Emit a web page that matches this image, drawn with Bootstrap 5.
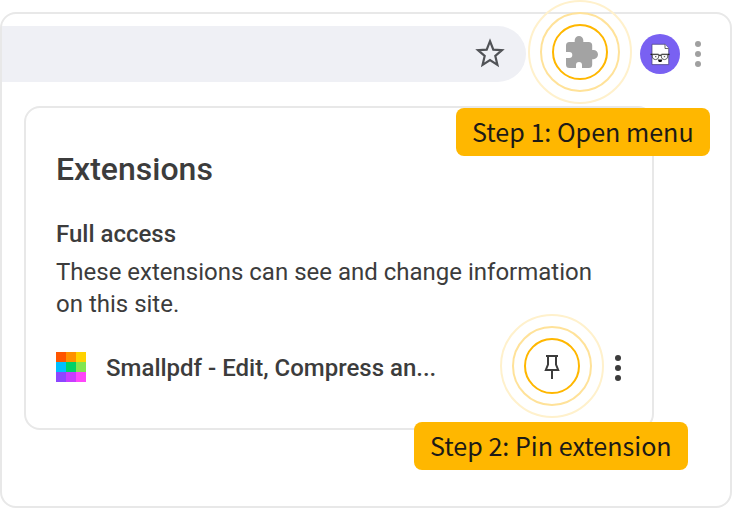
<!DOCTYPE html>
<html lang="en">
<head>
<meta charset="utf-8">
<meta name="viewport" content="width=device-width, initial-scale=1">
<title>Extensions</title>
<link href="https://cdn.jsdelivr.net/npm/bootstrap@5.3.0/dist/css/bootstrap.min.css" rel="stylesheet">
<style>
body{background:#fff;font-family:Roboto,sans-serif;color:#3c3c3c;padding-top:12px;height:508px;overflow:hidden}
svg{display:block;flex:none}
.browser{height:496px;border:2px solid #e8e8e8;border-radius:16px}
.toolbar{height:56px;margin-top:12px}
.address{width:524px;height:56px;background:#eff0f5;border-radius:0 28px 28px 0;padding-right:18px}
.address svg{margin-top:-2px}
.ext-button{margin-left:26px;width:56px;height:56px;top:-2px}
.ext-button svg{margin-left:4px}
.avatar{margin-left:32px;width:40px;height:40px;background:#7961f2}
.panel{width:630px;height:324px;margin:24px 0 0 22px;border:2px solid #e8e8e8;border-radius:16px;padding:0 30px}
.panel h1{font-size:32px;line-height:40px;font-weight:500;margin:41px 0 0}
.panel h2{font-size:24px;line-height:32px;font-weight:500;margin:29px 0 0}
.panel p{font-size:24px;line-height:32px;margin:6px 0 0}
.entry{height:56px;margin-top:18px}
.entry-logo{margin-top:2px}
.entry-name{font-size:24px;line-height:32px;font-weight:500;margin-left:20px;width:418px;margin-top:4px}
.entry-more{margin:4px 0 0 35px}
.pulse{width:56px;height:56px;border:2px solid #ffb700;border-radius:50%}
.pulse::before,.pulse::after{content:"";position:absolute;border:2px solid #ffe299;border-radius:50%;inset:-14px}
.pulse::after{border-color:#fff1cc;inset:-26px}
.step{background:#ffb700;color:#1c1a17;border-radius:8px;height:48px;font:400 25.1px/46px "Noto Sans CJK SC",sans-serif;padding:0 16px;white-space:nowrap}
.step-open{left:456px;top:108px;width:254px}
.step-pin{left:414px;top:422px;width:274px}
</style>
</head>
<body>
<main class="browser">
  <div class="toolbar d-flex align-items-center">
    <div class="address d-flex align-items-center justify-content-end">
      <svg width="36" height="36" viewBox="0 0 36 36" fill="none" stroke="#505256" stroke-width="2.2" stroke-miterlimit="10"><path d="M18 6.2L21.3 14.6L30 15.2L23.3 21L25.4 29.8L18 25L10.6 29.8L12.7 21L6 15.2L14.7 14.6Z"/></svg>
    </div>
    <div class="ext-button pulse position-relative d-flex align-items-center justify-content-center">
      <svg width="32" height="32" viewBox="0 0 32 32" fill="#a3a3a3"><path d="M3.5 6H8.7V4.3a4.3 4.3 0 0 1 8.6 0V6h5.4A3.5 3.5 0 0 1 26.2 9.5V14h1.2a4.6 4.6 0 0 1 0 9.2h-1.2v5.3a3.5 3.5 0 0 1-3.5 3.5H16v-3a3 3 0 0 0-6 0v3H3.5A3.5 3.5 0 0 1 0 28.5V22h3.3a3 3 0 0 0 0-6H0V9.5A3.5 3.5 0 0 1 3.5 6z"/></svg>
    </div>
    <div class="avatar rounded-circle">
      <svg width="40" height="40" viewBox="0 0 40 40"><path d="M12 10.3h13.2l3.5 4V30.6H12z" fill="#fff" stroke="#443b78" stroke-width=".7"/><path d="M25 10.5v4h3.6" fill="#fff" stroke="#444" stroke-width=".8"/><path d="M10.5 20.4h8M21.5 20.4h8M18.6 21.6q1.4-1 2.8 0" fill="none" stroke="#222" stroke-width="1.1"/><path d="M12.3 20.6h6.4v2.4q-.6 2.6-3.2 2.6t-3.2-2.6zM21.3 20.6h6.4v2.4q-.6 2.6-3.2 2.6t-3.2-2.6z" fill="#fff" stroke="#333" stroke-width=".8"/><path d="M15 22.7h1.4M23.8 22.7h1.4" stroke="#444"/><path d="M17.8 25.5h4.6l-1 2.4h-2.6z" fill="#111"/></svg>
    </div>
    <svg class="ms-3" width="4" height="28" viewBox="0 0 4 28" overflow="visible" fill="#a0a0a0"><circle cx="2" cy="4" r="3"/><circle cx="2" cy="14" r="3"/><circle cx="2" cy="24" r="3"/></svg>
  </div>
  <section class="panel">
    <h1>Extensions</h1>
    <h2>Full access</h2>
    <p>These extensions can see and change information<br>on this site.</p>
    <div class="entry d-flex align-items-center">
      <svg class="entry-logo" width="30" height="30" viewBox="0 0 30 30" shape-rendering="crispEdges"><path fill="#ff5500" d="M0 0h10v10H0z"/><path fill="#ff9100" d="M10 0h10v10H10z"/><path fill="#ffd200" d="M20 0h10v10H20z"/><path fill="#00bfff" d="M0 10h10v10H0z"/><path fill="#00d267" d="M10 10h10v10H10z"/><path fill="#82e650" d="M20 10h10v10H20z"/><path fill="#8c46ff" d="M0 20h10v10H0z"/><path fill="#c83cff" d="M10 20h10v10H10z"/><path fill="#ff46fa" d="M20 20h10v10H20z"/></svg>
      <div class="entry-name">Smallpdf - Edit, Compress an...</div>
      <div class="pulse position-relative d-flex align-items-center justify-content-center flex-shrink-0">
        <svg width="16" height="26" viewBox="0 0 16 26" fill="none" stroke="#3c3c3c" stroke-width="2"><path d="M2 3h12M4 3v8.5L1.8 17h12.4L12 11.5V3M8 17v9"/></svg>
      </div>
      <svg class="entry-more" width="6" height="28" viewBox="0 0 6 28" fill="#3c3c3c"><circle cx="3" cy="4" r="3"/><circle cx="3" cy="14" r="3"/><circle cx="3" cy="24" r="3"/></svg>
    </div>
  </section>
</main>
<div class="step step-open position-absolute">Step 1: Open menu</div>
<div class="step step-pin position-absolute">Step 2: Pin extension</div>
<script src="https://cdn.jsdelivr.net/npm/bootstrap@5.3.0/dist/js/bootstrap.bundle.min.js"></script>
</body>
</html>
